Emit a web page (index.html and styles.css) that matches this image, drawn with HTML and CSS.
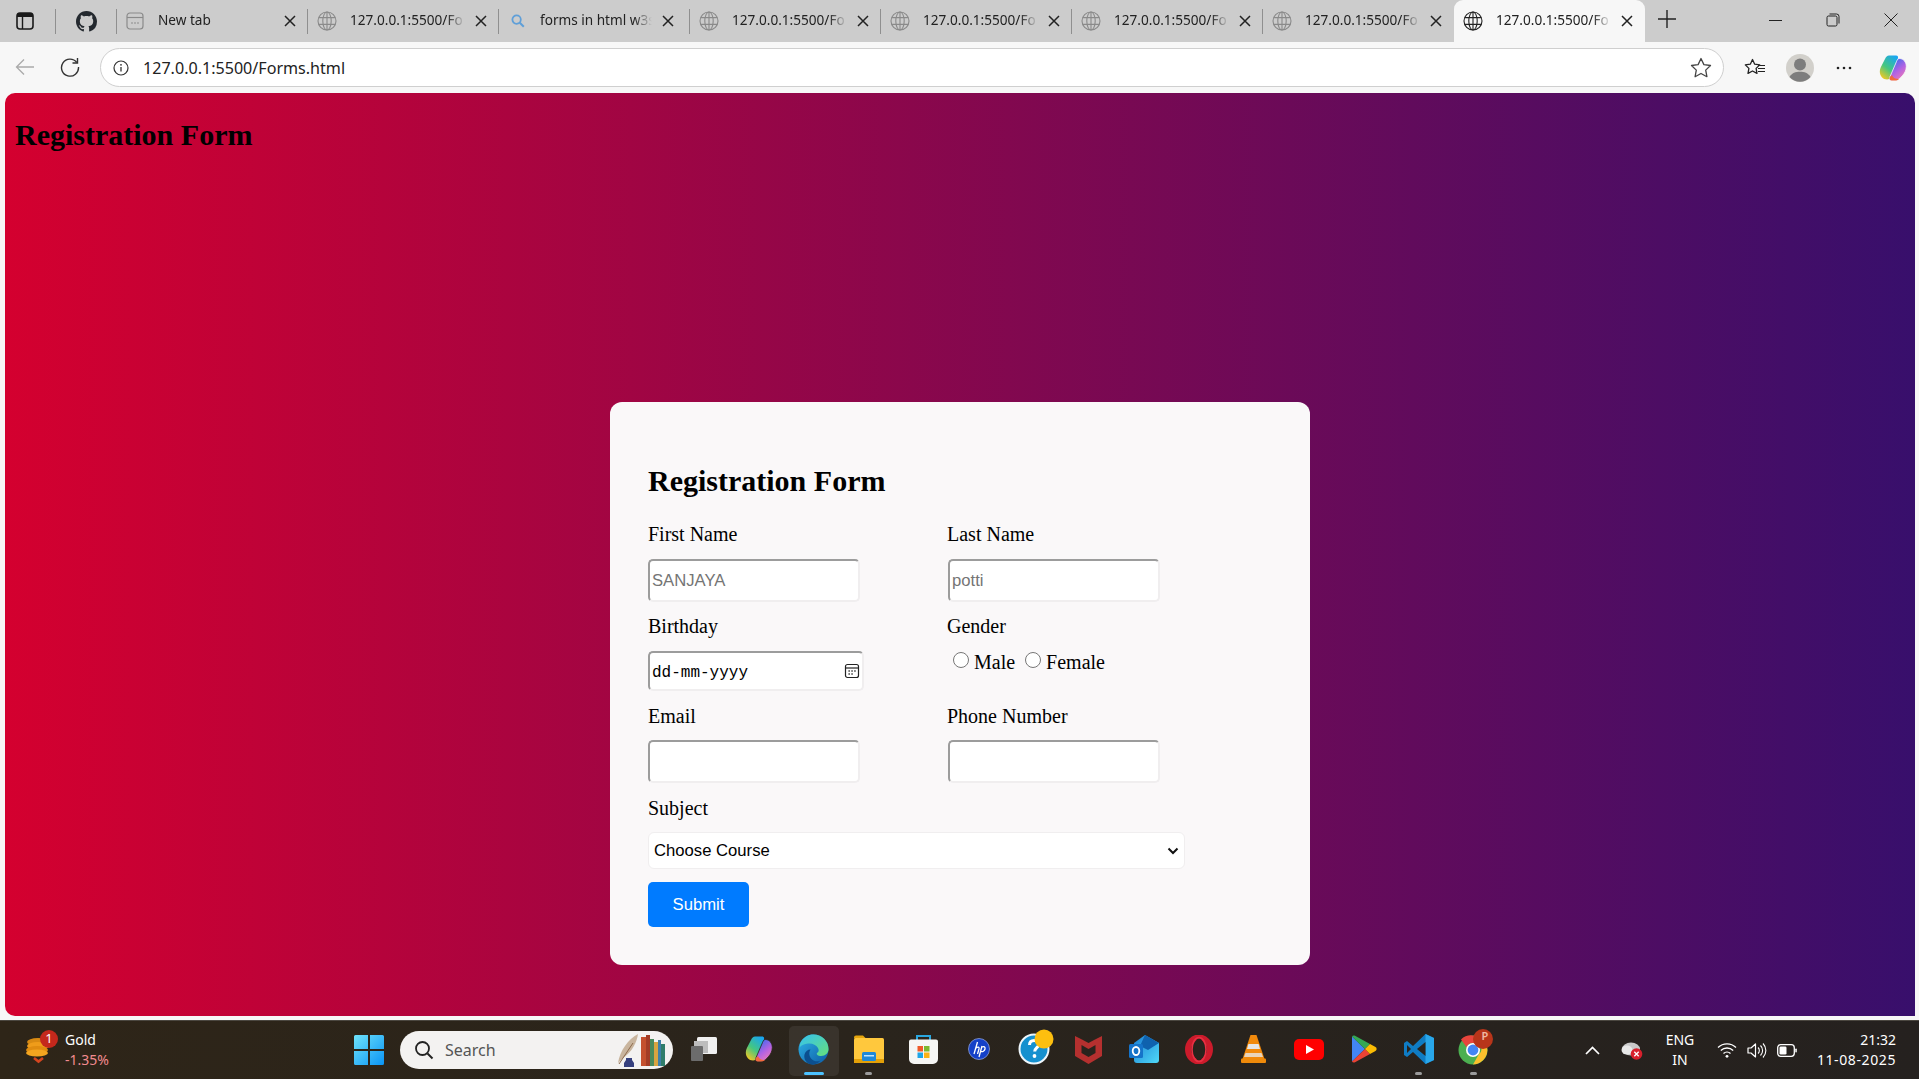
FILE: index.html
```html
<!DOCTYPE html>
<html lang="en">
<head>
<meta charset="utf-8">
<title>Registration Form</title>
<link rel="stylesheet" href="styles.css">
</head>
<body>
<svg class="defs" width="0" height="0" aria-hidden="true">
  <defs>
    <symbol id="globe" viewBox="0 0 20 20"><g fill="none" stroke="currentColor" stroke-width="1.1"><circle cx="10" cy="10" r="9"/><ellipse cx="10" cy="10" rx="4.2" ry="9"/><path d="M1.8 6.6h16.4M1.8 13.4h16.4M10 1v18"/></g></symbol>
    <symbol id="close" viewBox="0 0 12 12"><path d="M1 1l10 10M11 1L1 11" fill="none" stroke="currentColor" stroke-width="1.5"/></symbol>
    <linearGradient id="cpA" x1="0.2" y1="1" x2="0.8" y2="0"><stop offset="0" stop-color="#f7c821"/><stop offset=".45" stop-color="#45c77f"/><stop offset="1" stop-color="#18a5f2"/></linearGradient>
    <linearGradient id="cpB" x1="0.2" y1="0" x2="0.8" y2="1"><stop offset="0" stop-color="#2f6cf0"/><stop offset=".55" stop-color="#b463e2"/><stop offset="1" stop-color="#f57fb0"/></linearGradient>
  </defs>
</svg>

<header class="tabstrip">
  <div class="strip-btn strip-sidebar">
    <svg width="18" height="18" viewBox="0 0 18 18"><rect x="1" y="1" width="16" height="16" rx="3" fill="none" stroke="#1a1a1a" stroke-width="1.6"/><path d="M1 5h16V4a3 3 0 0 0-3-3H4a3 3 0 0 0-3 3z" fill="#1a1a1a"/><path d="M6.5 5v12" stroke="#1a1a1a" stroke-width="1.4"/></svg>
  </div>
  <div class="strip-btn strip-github">
    <svg width="21" height="21" viewBox="0 0 16 16"><path fill="#24292f" d="M8 0C3.58 0 0 3.58 0 8c0 3.54 2.29 6.53 5.47 7.59.4.07.55-.17.55-.38 0-.19-.01-.82-.01-1.49-2.01.37-2.53-.49-2.69-.94-.09-.23-.48-.94-.82-1.13-.28-.15-.68-.52-.01-.53.63-.01 1.08.58 1.23.82.72 1.21 1.87.87 2.33.66.07-.52.28-.87.51-1.07-1.78-.2-3.64-.89-3.64-3.95 0-.87.31-1.59.82-2.15-.08-.2-.36-1.02.08-2.12 0 0 .67-.21 2.2.82.64-.18 1.32-.27 2-.27s1.36.09 2 .27c1.53-1.04 2.2-.82 2.2-.82.44 1.1.16 1.92.08 2.12.51.56.82 1.27.82 2.15 0 3.07-1.87 3.75-3.65 3.95.29.25.54.73.54 1.48 0 1.07-.01 1.93-.01 2.2 0 .21.15.46.55.38A8.01 8.01 0 0 0 16 8c0-4.42-3.58-8-8-8z"/></svg>
  </div>

  <div class="tab">
    <svg class="tab-icon" width="18" height="18" viewBox="0 0 18 18"><rect x="1" y="1" width="16" height="16" rx="3" fill="none" stroke="#8a8a8a" stroke-width="1.2"/><path d="M1 5.5h16" stroke="#8a8a8a" stroke-width="1.2"/><path d="M5.5 11h1M8.5 11h1M11.5 11h1" stroke="#777" stroke-width="1.3"/></svg>
    <span class="tab-title tab-title-new">New tab</span>
    <svg class="tab-x" width="12" height="12"><use href="#close"/></svg>
  </div>
  <div class="tab">
    <svg class="tab-icon tab-globe" width="20" height="20"><use href="#globe"/></svg>
    <span class="tab-title">127.0.0.1:5500/Fo</span>
    <svg class="tab-x" width="12" height="12"><use href="#close"/></svg>
  </div>
  <div class="tab">
    <svg class="tab-icon tab-search" width="14" height="14" viewBox="0 0 14 14"><circle cx="5.6" cy="5.6" r="4.2" fill="none" stroke="#5f9fd8" stroke-width="1.8"/><path d="M8.8 8.8l4 4" stroke="#5f9fd8" stroke-width="2"/></svg>
    <span class="tab-title tab-title-search">forms in html w3s</span>
    <svg class="tab-x" width="12" height="12"><use href="#close"/></svg>
  </div>
  <div class="tab">
    <svg class="tab-icon tab-globe" width="20" height="20"><use href="#globe"/></svg>
    <span class="tab-title">127.0.0.1:5500/Fo</span>
    <svg class="tab-x" width="12" height="12"><use href="#close"/></svg>
  </div>
  <div class="tab">
    <svg class="tab-icon tab-globe" width="20" height="20"><use href="#globe"/></svg>
    <span class="tab-title">127.0.0.1:5500/Fo</span>
    <svg class="tab-x" width="12" height="12"><use href="#close"/></svg>
  </div>
  <div class="tab">
    <svg class="tab-icon tab-globe" width="20" height="20"><use href="#globe"/></svg>
    <span class="tab-title">127.0.0.1:5500/Fo</span>
    <svg class="tab-x" width="12" height="12"><use href="#close"/></svg>
  </div>
  <div class="tab tab-last">
    <svg class="tab-icon tab-globe" width="20" height="20"><use href="#globe"/></svg>
    <span class="tab-title">127.0.0.1:5500/Fo</span>
    <svg class="tab-x" width="12" height="12"><use href="#close"/></svg>
  </div>
  <div class="tab tab-active">
    <svg class="tab-icon" width="20" height="20"><use href="#globe"/></svg>
    <span class="tab-title">127.0.0.1:5500/Fo</span>
    <svg class="tab-x" width="12" height="12"><use href="#close"/></svg>
  </div>
  <div class="new-tab">
    <svg width="18" height="18" viewBox="0 0 18 18"><path d="M9 0v18M0 9h18" stroke="#222" stroke-width="1.4"/></svg>
  </div>
  <div class="window-controls">
    <div class="win-btn"><svg width="13" height="13" viewBox="0 0 13 13"><path d="M0 6.5h13" stroke="#222" stroke-width="1"/></svg></div>
    <div class="win-btn"><svg width="14" height="14" viewBox="0 0 14 14"><rect x="1" y="3" width="10" height="10" rx="1.5" fill="none" stroke="#222"/><path d="M3.5 1h7A2.5 2.5 0 0 1 13 3.5v7" fill="none" stroke="#222"/></svg></div>
    <div class="win-btn"><svg width="14" height="14" viewBox="0 0 14 14"><path d="M.5.5l13 13M13.500 .5l-13 13" stroke="#222" stroke-width="1"/></svg></div>
  </div>
</header>

<nav class="toolbar">
  <div class="nav-btn">
    <svg width="20" height="18" viewBox="0 0 20 18"><path d="M19 9H1.500M9 1.500L1.500 9 9 16.500" fill="none" stroke="#aaa" stroke-width="1.300"/></svg>
  </div>
  <div class="nav-btn">
    <svg width="20" height="20" viewBox="0 0 20 20"><path d="M16.800 5.500A8.500 8.500 0 1 0 18.500 10" fill="none" stroke="#333" stroke-width="1.400"/><path d="M17.500 1v5h-5" fill="none" stroke="#333" stroke-width="1.400"/></svg>
  </div>
  <div class="address">
    <svg class="address-info" width="16" height="16" viewBox="0 0 16 16"><circle cx="8" cy="8" r="7" fill="none" stroke="#333" stroke-width="1.200"/><path d="M8 7v4.500" stroke="#333" stroke-width="1.300"/><circle cx="8" cy="4.800" r=".9" fill="#333"/></svg>
    <span class="address-url">127.0.0.1:5500/Forms.html</span>
    <svg class="address-star" width="22" height="21" viewBox="0 0 22 21"><path d="M11 1.500l2.900 6.100 6.600.9-4.800 4.600 1.200 6.600-5.900-3.200-5.900 3.200 1.200-6.600L1.500 8.500l6.600-.9z" fill="none" stroke="#444" stroke-width="1.300" stroke-linejoin="round"/></svg>
  </div>
  <div class="tool-group">
    <svg class="tool-fav" width="22" height="20" viewBox="0 0 22 20"><path d="M8.500 1.500l2.200 4.700 5 .7-3.600 3.500.9 5-4.500-2.400-4.500 2.400.9-5L1.300 6.900l5-.7z" fill="none" stroke="#222" stroke-width="1.300" stroke-linejoin="round"/><path d="M14 7.500h7M14 10.500h7M14 13.500h7" stroke="#222" stroke-width="1.100"/></svg>
    <svg class="tool-avatar" width="28" height="28" viewBox="0 0 28 28"><circle cx="14" cy="14" r="14" fill="#d2d0cb"/><circle cx="14" cy="10.500" r="6" fill="#7d7d7d"/><path d="M3.500 23C6 19 9.500 17.800 14 17.800S22 19 24.500 23A14 14 0 0 1 3.500 23z" fill="#7d7d7d"/></svg>
    <svg class="tool-more" width="16" height="4" viewBox="0 0 16 4"><circle cx="2" cy="2" r="1.300" fill="#222"/><circle cx="8" cy="2" r="1.300" fill="#222"/><circle cx="14" cy="2" r="1.300" fill="#222"/></svg>
    <svg class="tool-copilot" width="28" height="28" viewBox="0 0 28 28">
      <path d="M10 1.500h7c2 0 2.500 1.500 1.800 3.300L12.500 22c-.9 2.300-2.300 3.500-4.500 3.500C4 25.500 .8 22 .8 17.500c0-1.500.4-3 1.100-4.500L6 5c1-2 2.200-3.500 4-3.500z" fill="url(#cpA)"/>
      <path d="M20.500 4.500c3.800 0 6.800 3.500 6.800 8 0 3.800-1.800 7-4 9.300-2 2.200-4 4.700-7.300 4.700h-3c-2 0-3-1.700-2.200-3.300L17.500 7.500c.8-2 1.500-3 3-3z" fill="url(#cpB)" stroke="#f7f7f7" stroke-width=".8"/>
      <path d="M10.800 23c-.9 2 .2 3.500 2 3.500h3.200c1.500 0 2.800-.5 4-1.500-3.500 0-6-1-7-4z" fill="#f26a3d"/>
    </svg>
  </div>
</nav>

<main class="page">
  <h1 class="page-title">Registration Form</h1>
  <form class="card">
    <h2 class="card-title">Registration Form</h2>
    <div class="field-grid">
      <div class="field">
        <label class="field-label">First Name</label>
        <input class="text-input" type="text" placeholder="SANJAYA">
      </div>
      <div class="field field-right">
        <label class="field-label">Last Name</label>
        <input class="text-input" type="text" placeholder="potti">
      </div>
      <div class="field">
        <label class="field-label">Birthday</label>
        <div class="date-input">
          <span class="date-text">dd-mm-yyyy</span>
          <svg width="16" height="16" viewBox="0 0 16 16"><rect x="1.500" y="1.500" width="13" height="13" rx="2" fill="none" stroke="#222" stroke-width="1.200"/><path d="M1.500 5h13" stroke="#222" stroke-width="1.200"/><path d="M4.500 8h1.300M7.400 8h1.300M10.300 8h1.300M4.500 11h1.300M7.400 11h1.300" stroke="#222" stroke-width="1.300"/></svg>
        </div>
      </div>
      <div class="field">
        <label class="field-label">Gender</label>
        <div class="radio-row">
          <input class="radio" type="radio" name="gender" id="male"><label class="radio-label" for="male">Male</label>
          <input class="radio" type="radio" name="gender" id="female"><label class="radio-label" for="female">Female</label>
        </div>
      </div>
      <div class="field field-tight">
        <label class="field-label">Email</label>
        <input class="text-input" type="email">
      </div>
      <div class="field field-tight field-right">
        <label class="field-label">Phone Number</label>
        <input class="text-input" type="tel">
      </div>
      <div class="field field-wide field-tight">
        <label class="field-label">Subject</label>
        <select class="select-input"><option>Choose Course</option></select>
      </div>
    </div>
    <button class="submit" type="button">Submit</button>
  </form>
</main>

<footer class="taskbar">
  <div class="widget">
    <svg class="widget-icon" width="34" height="40" viewBox="0 0 34 40">
      <ellipse cx="14" cy="12" rx="11" ry="4" fill="#d98a12"/><ellipse cx="14" cy="16" rx="11" ry="4" fill="#ef9c1a"/><ellipse cx="13" cy="20" rx="11" ry="4" fill="#e08c10"/><ellipse cx="13" cy="23" rx="11" ry="3.500" fill="#f4a51f"/>
      <path d="M10 28l4.500 3.500L19 28" fill="none" stroke="#d4451f" stroke-width="2.600"/>
      <circle cx="25" cy="9" r="9" fill="#c4281c"/>
    </svg>
    <span class="widget-badge">1</span>
    <div class="widget-text"><span class="widget-name">Gold</span><span class="widget-change">-1.35%</span></div>
  </div>

  <div class="task-center">
    <div class="start">
      <svg width="30" height="30" viewBox="0 0 30 30"><defs><linearGradient id="win" x1="0" y1="0" x2="1" y2="1"><stop offset="0" stop-color="#6fe3fb"/><stop offset="1" stop-color="#0a94f5"/></linearGradient></defs><path d="M0 1.500A1.500 1.500 0 0 1 1.500 0H14v14H0zM16 0h12.500A1.500 1.500 0 0 1 30 1.500V14H16zM0 16h14v14H1.500A1.500 1.500 0 0 1 0 28.500zM16 16h14v12.500a1.500 1.500 0 0 1-1.500 1.500H16z" fill="url(#win)"/></svg>
    </div>
    <div class="search-pill">
      <svg width="20" height="20" viewBox="0 0 20 20"><circle cx="8.500" cy="8.500" r="6.500" fill="none" stroke="#222" stroke-width="1.800"/><path d="M13.500 13.500l5 5" stroke="#222" stroke-width="2"/></svg>
      <span class="search-text">Search</span>
      <svg class="search-art" width="52" height="34" viewBox="0 0 52 34">
        <path d="M2 30C4 18 12 6 22 1c-1 8-6 18-15 24z" fill="#c9b59e"/><path d="M3 31L17 10" stroke="#8d6a4c"/>
        <path d="M10 25h6v2l2 3v4H8v-4l2-3z" fill="#36407e"/>
        <rect x="25" y="4" width="5" height="29" fill="#c4502e"/><rect x="30" y="2" width="4" height="31" fill="#a33c26"/><rect x="34" y="6" width="4" height="27" fill="#4b8a5c"/><rect x="38" y="9" width="4" height="24" fill="#d9a441"/><rect x="42" y="7" width="3" height="26" fill="#3f7fa8"/><rect x="45" y="11" width="4" height="22" fill="#2f7d6a"/>
      </svg>
    </div>

    <div class="task-slot">
      <svg width="26" height="24" viewBox="0 0 26 24"><rect x="6" y="0" width="20" height="17" rx="1.500" fill="#f0f0f0"/><rect x="3" y="4" width="14" height="12" fill="#bdbdbd"/><rect x="0" y="9" width="12" height="15" rx="1" fill="#6c6c6c"/></svg>
    </div>
    <div class="task-slot">
      <svg width="28" height="28" viewBox="0 0 28 28">
        <path d="M10 1.500h7c2 0 2.500 1.500 1.800 3.300L12.500 22c-.9 2.300-2.300 3.500-4.500 3.500C4 25.500 .8 22 .8 17.500c0-1.500.4-3 1.100-4.500L6 5c1-2 2.200-3.500 4-3.500z" fill="url(#cpA)"/>
        <path d="M20.500 4.500c3.800 0 6.800 3.500 6.800 8 0 3.800-1.800 7-4 9.300-2 2.200-4 4.700-7.300 4.700h-3c-2 0-3-1.700-2.200-3.300L17.500 7.500c.8-2 1.500-3 3-3z" fill="url(#cpB)" stroke="#2a241c" stroke-width=".8"/>
        <path d="M10.800 23c-.9 2 .2 3.500 2 3.500h3.200c1.500 0 2.800-.5 4-1.500-3.500 0-6-1-7-4z" fill="#f26a3d"/>
      </svg>
    </div>
    <div class="task-slot task-active">
      <svg width="31" height="31" viewBox="0 0 31 31">
        <defs>
          <linearGradient id="edA" x1="0" y1="0" x2="1" y2="1"><stop offset="0" stop-color="#2fb6e8"/><stop offset="1" stop-color="#0c59a4"/></linearGradient>
          <linearGradient id="edB" x1="0" y1="0" x2="1" y2="1"><stop offset="0" stop-color="#35c1f1"/><stop offset="1" stop-color="#66e07a"/></linearGradient>
        </defs>
        <circle cx="15.500" cy="15.500" r="15" fill="url(#edA)"/>
        <path d="M2 10C5 3 10 .5 15.500 .5 24 .5 30.500 7 30.500 15c0 4-3 7-7.500 7-3 0-5-1.500-4-3 2-1 2-3 1-5-2-3.500-6-5-10-4.500C6 10 3.500 11 2 13z" fill="url(#edB)"/>
        <path d="M13 30.500c-5-1-7.500-6-6.500-10 .8-3 3-5 6-5-2 3-1.500 7 1 9.500 2.500 2.500 6 3 9 1.500-2.500 3-6 4.700-9.500 4z" fill="#0b4f8f"/>
      </svg>
      <span class="task-bar-active"></span>
    </div>
    <div class="task-slot">
      <svg width="30" height="28" viewBox="0 0 30 28"><path d="M0 2.500A2 2 0 0 1 2 .5h7l3 3h-12z" fill="#e5a50d"/><rect x="0" y="3" width="30" height="25" rx="1.500" fill="#ffc83d"/><rect x="0" y="24" width="30" height="4" fill="#e3a008"/><rect x="8" y="17" width="14" height="9" rx="1.500" fill="#1e88d8"/><rect x="10" y="20" width="10" height="1.500" fill="#bfe3fb"/></svg>
      <span class="task-dot"></span>
    </div>
    <div class="task-slot">
      <svg width="29" height="30" viewBox="0 0 29 30"><path d="M8 6V2h13v4" fill="none" stroke="#2aa7e0" stroke-width="2"/><path d="M0 7.500A2 2 0 0 1 2 5.500h25a2 2 0 0 1 2 2V25a5 5 0 0 1-5 5H5a5 5 0 0 1-5-5z" fill="#f6f6f4"/><rect x="8.500" y="12" width="5.500" height="5.500" fill="#ef5a29"/><rect x="15" y="12" width="5.500" height="5.500" fill="#7cb82f"/><rect x="8.500" y="18.500" width="5.500" height="5.500" fill="#1fa5e8"/><rect x="15" y="18.500" width="5.500" height="5.500" fill="#fbb216"/></svg>
    </div>
    <div class="task-slot">
      <svg width="22" height="22" viewBox="0 0 22 22"><circle cx="11" cy="11" r="10.500" fill="#1440c8" stroke="#8da0d8" stroke-width=".8"/><path d="M9.500 4L6 16M8 10c2-1.500 3.500-1 3 1l-1.500 5M14 8l-3 11M14 9c2-1 3.500 0 3 2-.5 2-2.500 3-4 2.500" fill="none" stroke="#fff" stroke-width="1.300"/></svg>
    </div>
    <div class="task-slot">
      <svg class="task-help" width="36" height="36" viewBox="0 0 36 36"><circle cx="16" cy="20" r="14.500" fill="#1590cf" stroke="#eef6fb" stroke-width="2"/><path d="M11.500 16c0-3 2-4.500 4.700-4.500s4.500 1.500 4.500 4c0 3-4 3.500-4 7" fill="none" stroke="#fff" stroke-width="3"/><circle cx="16.500" cy="27" r="1.900" fill="#fff"/><circle cx="26" cy="10" r="9.500" fill="#fdbf0f"/></svg>
    </div>
    <div class="task-slot">
      <svg width="27" height="30" viewBox="0 0 27 30"><path d="M0 2l7 3.500L13.500 9 20 5.500 27 2v20l-13.500 8L0 22z" fill="#b5302f"/><path d="M6.500 11v8l7 4 7-4v-8l-7 4z" fill="#29231d"/></svg>
    </div>
    <div class="task-slot">
      <svg width="30" height="28" viewBox="0 0 30 28"><defs><linearGradient id="ol" x1="0" y1="0" x2="1" y2="1"><stop offset="0" stop-color="#1b7fd4"/><stop offset="1" stop-color="#4fd8f7"/></linearGradient></defs><path d="M5 8l11-8 14 8v17a3 3 0 0 1-3 3H8a3 3 0 0 1-3-3z" fill="url(#ol)"/><path d="M16 0l14 8-11 7-8-4z" fill="#0f62ae"/><rect x="0" y="9" width="14" height="14" rx="1.500" fill="#1573c9"/><ellipse cx="7" cy="16" rx="3.300" ry="4" fill="none" stroke="#fff" stroke-width="1.800"/></svg>
    </div>
    <div class="task-slot">
      <svg width="28" height="29" viewBox="0 0 28 29"><ellipse cx="14" cy="14.500" rx="11" ry="12" fill="none" stroke="#cc1b2b" stroke-width="6"/><ellipse cx="14" cy="14.500" rx="5.500" ry="11" fill="#29231d"/><ellipse cx="14" cy="14.500" rx="7" ry="12" fill="none" stroke="#e83043" stroke-width="1.600"/></svg>
    </div>
    <div class="task-slot">
      <svg width="25" height="28" viewBox="0 0 25 28"><path d="M9.500 0h6l8 24H1.500z" fill="#f28a0c"/><path d="M7.400 9h10.200l1.400 5H6z" fill="#e6e6e6"/><path d="M4.500 18h16l1.500 4H3z" fill="#e6e6e6" opacity=".8"/><rect x="0" y="23.500" width="25" height="4.500" rx="1" fill="#ef8a0a"/></svg>
    </div>
    <div class="task-slot">
      <svg width="30" height="21" viewBox="0 0 30 21"><rect width="30" height="21" rx="5" fill="#f00"/><path d="M12 6l8 4.500-8 4.500z" fill="#fff"/></svg>
    </div>
    <div class="task-slot">
      <svg width="26" height="28" viewBox="0 0 26 28"><path d="M1 1.500v25L14 14z" fill="#4285f4"/><path d="M1 1.500c.5-1 2-1.300 3-.7L19 9l-5 5z" fill="#34a853"/><path d="M1 26.500c.5 1 2 1.300 3 .7L19 19l-5-5z" fill="#ea4335"/><path d="M19 9l5.500 3c1.500.9 1.500 3 0 4L19 19l-5-5z" fill="#fbbc04"/></svg>
    </div>
    <div class="task-slot">
      <svg width="30" height="30" viewBox="0 0 30 30"><path d="M21.500 0L30 4v22l-8.500 4L9 18 3 23 0 21V9l3-2 6 5z" fill="#0f7cc4"/><path d="M21.500 0L30 4v22l-8.500 4z" fill="#29a7ea"/><path d="M21.500 8L13 15l8.500 7z" fill="#29231d"/><path d="M3 11v8l4-4z" fill="#29231d"/></svg>
      <span class="task-dot"></span>
    </div>
    <div class="task-slot">
      <svg class="task-chrome" width="36" height="36" viewBox="0 0 36 36"><circle cx="15" cy="21" r="14.500" fill="#4caf50"/><path d="M15 6.500A14.500 14.500 0 0 1 27.600 14H15a7 7 0 0 0-6.400 4.200L3 10.500A14.500 14.500 0 0 1 15 6.500z" fill="#e8453c"/><path d="M27.600 14A14.500 14.500 0 0 1 15 35.500l6-10.500a7 7 0 0 0 0-11z" fill="#fbc02d"/><circle cx="15" cy="21" r="7" fill="#fff"/><circle cx="15" cy="21" r="5.400" fill="#4285f4"/><circle cx="25" cy="10" r="10" fill="#b7351a"/></svg>
      <span class="chrome-badge">P</span>
      <span class="task-dot"></span>
    </div>
  </div>

  <div class="tray">
    <svg class="tray-chevron" width="15" height="9" viewBox="0 0 15 9"><path d="M1 8l6.500-6.500L14 8" fill="none" stroke="#fff" stroke-width="1.700"/></svg>
    <svg class="tray-cloud" width="22" height="20" viewBox="0 0 22 20"><ellipse cx="10" cy="8" rx="9" ry="6.500" fill="#c9c9c9"/><ellipse cx="6" cy="9" rx="5.500" ry="4.500" fill="#e8e8e8"/><circle cx="15.500" cy="13" r="5.800" fill="#d8202c"/><path d="M13.300 10.800l4.400 4.400M17.700 10.800l-4.400 4.400" stroke="#fff" stroke-width="1.300"/></svg>
    <div class="tray-lang"><span>ENG</span><span>IN</span></div>
    <svg class="tray-wifi" width="20" height="16" viewBox="0 0 20 16"><path d="M1 5.500a13 13 0 0 1 18 0M3.800 8.500a9 9 0 0 1 12.400 0M6.500 11.500a5 5 0 0 1 7 0" fill="none" stroke="#fff" stroke-width="1.300"/><circle cx="10" cy="14.300" r="1.400" fill="#fff"/></svg>
    <svg class="tray-volume" width="20" height="17" viewBox="0 0 20 17"><path d="M1 6h3l4.500-4v13L4 11H1z" fill="none" stroke="#fff" stroke-width="1.200" stroke-linejoin="round"/><path d="M11 5.500a4 4 0 0 1 0 6M13.500 3.500a7 7 0 0 1 0 10M16 1.500a10 10 0 0 1 0 14" fill="none" stroke="#fff" stroke-width="1.100"/></svg>
    <svg class="tray-battery" width="20" height="13" viewBox="0 0 20 13"><rect x=".7" y=".7" width="16.600" height="11.600" rx="3" fill="none" stroke="#fff" stroke-width="1.300"/><rect x="2.500" y="2.500" width="7" height="8" rx="1.300" fill="#fff"/><rect x="18.300" y="4.500" width="1.500" height="4" rx=".7" fill="#fff"/></svg>
    <div class="tray-clock"><span>21:32</span><span class="tray-date">11-08-2025</span></div>
  </div>
</footer>
</body>
</html>
```

FILE: styles.css
```css
* { box-sizing: border-box; }

html, body { margin: 0; padding: 0; }

body {
  width: 1919px;
  height: 1079px;
  overflow: hidden;
  display: flex;
  flex-direction: column;
  background: #f7f7f7;
  font-family: "Liberation Serif", serif;
}

.defs { position: absolute; }

/* Tab strip */
.tabstrip {
  height: 42px;
  flex: none;
  display: flex;
  background: #cccccc;
  font-family: "Noto Sans", sans-serif;
  color: #222;
}

.strip-btn {
  height: 42px;
  display: flex;
  align-items: center;
  justify-content: center;
  position: relative;
}
.strip-btn::after,
.tab::after {
  content: "";
  position: absolute;
  right: 0;
  top: 9px;
  height: 25px;
  width: 1px;
  background: #8f8f8f;
}
.strip-sidebar { width: 56px; padding-right: 6px; }
.strip-github { width: 61px; }

.tab {
  width: 191px;
  height: 42px;
  display: flex;
  align-items: center;
  position: relative;
  padding-left: 9px;
}
.tab-last::after, .tab-active::after { display: none; }
.tab-active {
  background: #f7f7f7;
  border-radius: 9px 9px 0 0;
}
.tab-icon { flex: none; }
.tab-globe { color: #8a8a8a; }
.tab-search { margin-left: 3px; }
.tab-title {
  width: 115px;
  margin-left: 13px;
  margin-top: -3px;
  font-size: 13.600px;
  white-space: nowrap;
  overflow: hidden;
  flex: none;
  -webkit-mask-image: linear-gradient(to right, #000 84%, transparent 100%);
  mask-image: linear-gradient(to right, #000 84%, transparent 100%);
}
.tab-title-new { margin-left: 14px; width: 116px; }
.tab-title-search { margin-left: 15px; width: 112px; }
.tab-x { flex: none; margin-left: 10px; color: #222; }

.new-tab {
  width: 44px;
  height: 38px;
  display: flex;
  align-items: center;
  justify-content: center;
}
.window-controls {
  margin-left: auto;
  display: flex;
}
.win-btn {
  width: 58px;
  height: 40px;
  display: flex;
  align-items: center;
  justify-content: center;
  padding-left: 2px;
}

/* Toolbar */
.toolbar {
  height: 51px;
  flex: none;
  display: flex;
  align-items: center;
  background: #f7f7f7;
  font-family: "Noto Sans", sans-serif;
}
.nav-btn {
  width: 45px;
  height: 40px;
  display: flex;
  align-items: center;
  justify-content: center;
  margin-top: -1px;
}
.nav-btn:first-child { margin-left: 2px; }
.address {
  width: 1624px;
  height: 39px;
  margin-left: 8px;
  display: flex;
  align-items: center;
  background: #fff;
  border: 1.500px solid #cfcfcf;
  border-radius: 20px;
  padding: 0 11px 0 12px;
}
.address-url {
  margin-left: 14px;
  font-size: 16.100px;
  color: #222;
}
.address-star { margin-left: auto; }
.tool-group {
  display: flex;
  align-items: center;
  flex: 1;
  height: 40px;
}
.tool-fav { margin-left: 20px; }
.tool-avatar { margin-left: 20px; }
.tool-more { margin-left: 22px; }
.tool-copilot { margin-left: 27px; }

/* Page */
.page {
  height: 923px;
  flex: none;
  margin: 0 4px 0 5px;
  padding: 19px 10px 0;
  border-radius: 10px 10px 0 10px;
  background: linear-gradient(to right, #d4002f, #380f6c);
}
.page-title {
  margin: 0;
  font-size: 30px;
  line-height: 46px;
  font-weight: 700;
  color: #000;
}
.card {
  width: 700px;
  height: 563px;
  margin: 244px auto 0;
  padding: 56px 38px 0;
  background: #faf8f9;
  border-radius: 12px;
}
.card-title {
  margin: 0 0 19px;
  font-size: 30px;
  line-height: 46px;
  font-weight: 700;
  color: #000;
}
.field-grid {
  display: grid;
  grid-template-columns: 299px 299px;
  row-gap: 13px;
}
.field { display: flex; flex-direction: column; align-items: flex-start; }
.field-wide { grid-column: 1 / 3; }
.field-label {
  display: block;
  height: 23px;
  line-height: 23px;
  margin-bottom: 13px;
  font-size: 20px;
  color: #000;
}
.field-tight .field-label { margin-bottom: 12px; }
.field-tight .text-input { margin-bottom: 1px; }
.field-right .text-input { margin-left: 1px; }
.text-input {
  width: 212px;
  height: 43px;
  padding: 0 2px;
  margin: 0;
  background: #fff;
  border-style: solid;
  border-width: 2px;
  border-color: #9c9c9c #f0eeef #f0eeef #9c9c9c;
  border-radius: 5px;
  font-family: "Liberation Sans", sans-serif;
  font-size: 16.670px;
  outline: none;
}
.text-input::placeholder { color: #757575; opacity: 1; }
.date-input {
  width: 216px;
  height: 40px;
  margin-bottom: 1px;
  padding: 0 2px;
  display: flex;
  align-items: center;
  justify-content: space-between;
  background: #fff;
  border-style: solid;
  border-width: 2px;
  border-color: #9c9c9c #f0eeef #f0eeef #9c9c9c;
  border-radius: 5px;
  font-family: "Liberation Mono", monospace;
  font-size: 16px;
  color: #000;
}
.date-text { padding-top: 3px; }
.radio-row {
  display: flex;
  align-items: center;
  height: 22px;
  padding-left: 6px;
  font-size: 20px;
}
.radio { width: 16px; height: 16px; margin: 0 5px 5px 0; flex: none; }
.radio-label { margin-right: 10px; margin-top: 1px; line-height: 23px; }
.select-input {
  appearance: none;
  -webkit-appearance: none;
  width: 537px;
  height: 37px;
  padding: 0 1px 0 5px;
  margin: 0 0 13px;
  background-color: #fff;
  background-image: url("data:image/svg+xml,%3Csvg xmlns='http://www.w3.org/2000/svg' width='12' height='8' viewBox='0 0 12 8'%3E%3Cpath d='M1.500 1.500L6 6l4.500-4.500' fill='none' stroke='%23111' stroke-width='2'/%3E%3C/svg%3E");
  background-repeat: no-repeat;
  background-position: right 5px center;
  border: 1px solid #f0eeef;
  border-radius: 6px;
  font-family: "Liberation Sans", sans-serif;
  font-size: 16.670px;
  color: #000;
  outline: none;
}
.submit {
  display: block;
  width: 101px;
  height: 45px;
  padding: 0;
  border: 0;
  border-radius: 5px;
  background: #007bff;
  color: #fff;
  font-family: "Liberation Sans", sans-serif;
  font-size: 16.670px;
}

/* Taskbar */
.taskbar {
  height: 59px;
  flex: none;
  margin-top: 4px;
  display: flex;
  align-items: center;
  position: relative;
  border-top: 1px solid #4b4740;
  background: linear-gradient(to right, #2e2518, #2a241c 45%, #25211f);
  font-family: "Noto Sans", sans-serif;
  color: #fff;
}
.widget {
  width: 340px;
  display: flex;
  align-items: center;
  position: relative;
  padding-left: 24px;
  flex: none;
}
.widget-icon { flex: none; }
.widget-badge {
  position: absolute;
  left: 40px;
  top: -1px;
  width: 18px;
  text-align: center;
  font-size: 13px;
  line-height: 18px;
  color: #fff;
}
.widget-text {
  display: flex;
  flex-direction: column;
  margin-left: 7px;
  font-size: 14px;
  line-height: 20px;
}
.widget-change { color: #f28b8f; }

.task-center { display: flex; align-items: center; height: 100%; }
.start {
  width: 63px;
  height: 100%;
  display: flex;
  align-items: center;
  justify-content: center;
  margin-left: -3px;
}
.search-pill {
  width: 273px;
  height: 38px;
  margin-right: 3px;
  display: flex;
  align-items: center;
  padding: 0 5px 0 14px;
  background: #f3f2f1;
  border-radius: 19px;
  color: #555;
}
.search-text { margin-left: 11px; font-size: 16px; }
.search-art { margin-left: auto; }

.task-slot {
  width: 55px;
  height: 100%;
  display: flex;
  align-items: center;
  justify-content: center;
  position: relative;
}
.task-slot svg { position: relative; top: -1px; }
.task-slot .task-help { left: 2px; top: -3px; }
.task-slot .task-chrome { left: 2px; top: -3px; }
.task-active::before {
  content: "";
  position: absolute;
  left: 3px;
  right: 2px;
  top: 5px;
  bottom: 3px;
  background: rgba(255, 255, 255, .07);
  border-radius: 5px;
}
.task-bar-active {
  position: absolute;
  left: 18px;
  bottom: 4px;
  width: 20px;
  height: 3px;
  border-radius: 2px;
  background: #4cc2ff;
}
.task-dot {
  position: absolute;
  left: 24px;
  bottom: 4px;
  width: 7px;
  height: 3px;
  border-radius: 2px;
  background: #9b9b9b;
}
.chrome-badge {
  position: absolute;
  left: 32px;
  top: 7px;
  width: 14px;
  text-align: center;
  font-size: 11px;
  font-weight: 600;
  color: #f0b9a3;
}

.tray {
  position: absolute;
  right: 0;
  top: 0;
  height: 100%;
  width: 340px;
  display: flex;
  align-items: center;
  font-size: 14px;
}
.tray-chevron { margin-left: 6px; }
.tray-cloud { margin-left: 21px; margin-top: 2px; }
.tray-lang {
  width: 36px;
  margin-left: 19px;
  display: flex;
  flex-direction: column;
  align-items: center;
  line-height: 20px;
}
.tray-wifi { margin-left: 19px; }
.tray-volume { margin-left: 10px; }
.tray-battery { margin-left: 10px; }
.tray-clock {
  margin-left: auto;
  margin-right: 23px;
  display: flex;
  flex-direction: column;
  align-items: flex-end;
  line-height: 20px;
}
.tray-date { letter-spacing: .6px; }
```
